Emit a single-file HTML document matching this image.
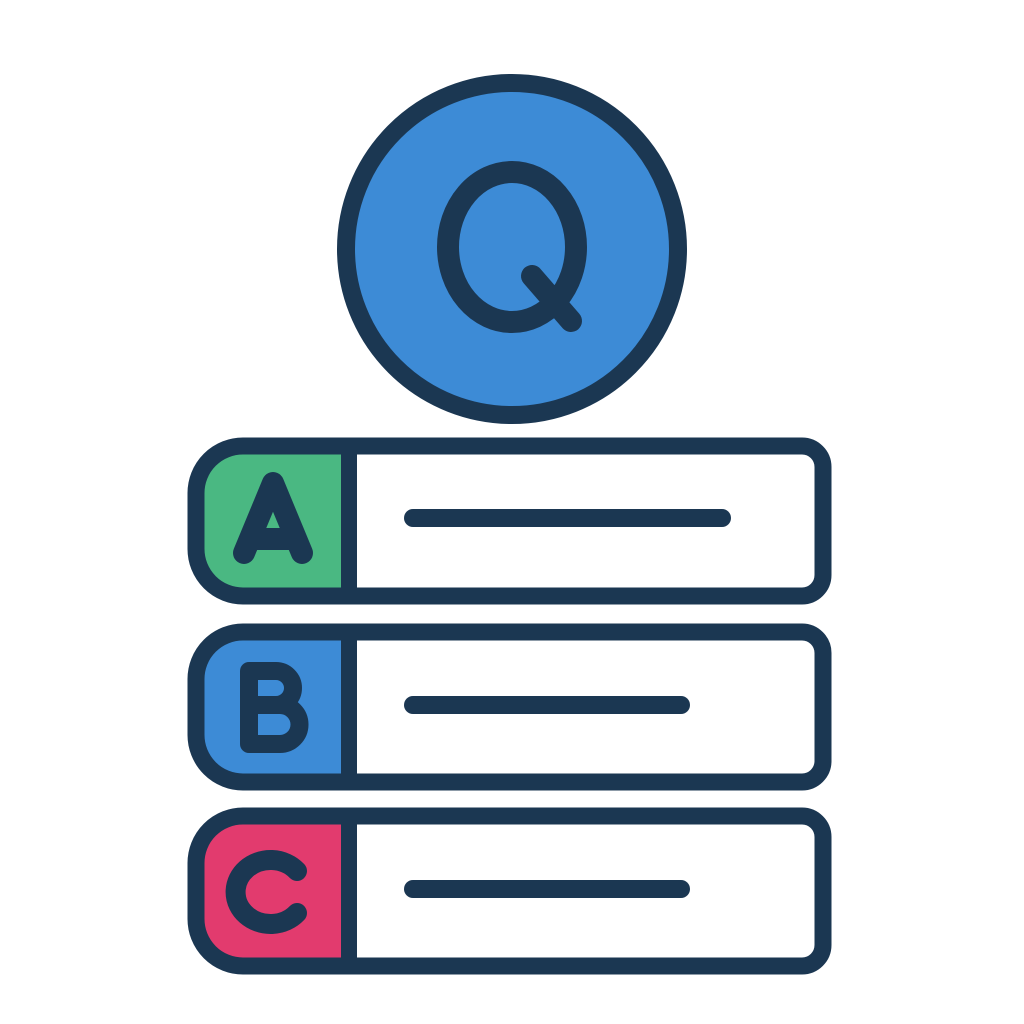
<!DOCTYPE html>
<html><head><style>html,body{margin:0;padding:0;background:#fff}svg{display:block}</style></head>
<body>
<svg width="1024" height="1024" viewBox="0 0 1024 1024" xmlns="http://www.w3.org/2000/svg">
<g stroke="#1b3752" fill="none" stroke-linecap="round" stroke-linejoin="round">
<circle cx="512" cy="249" r="166" fill="#3d8bd6" stroke-width="18"/>
<ellipse cx="512" cy="247" rx="64" ry="75" stroke-width="22"/>
<line x1="532" y1="276" x2="571" y2="321" stroke-width="22"/>

<!-- Row A -->
<path d="M349 446 H243 A47 47 0 0 0 196 493 V549 A47 47 0 0 0 243 596 H349 Z" fill="#4ab882" stroke="none"/>
<path d="M243 446 H802 A21 21 0 0 1 823 467 V575 A21 21 0 0 1 802 596 H243 A47 47 0 0 1 196 549 V493 A47 47 0 0 1 243 446 Z" stroke-width="17"/>
<line x1="349" y1="446" x2="349" y2="596" stroke-width="16" stroke-linecap="butt"/>
<path d="M244 553 L273 483 L302 553 M254 539 H292" stroke-width="22"/>
<line x1="413" y1="518" x2="722" y2="518" stroke-width="18"/>

<!-- Row B -->
<path d="M349 632 H243 A47 47 0 0 0 196 679 V735 A47 47 0 0 0 243 782 H349 Z" fill="#3d8bd6" stroke="none"/>
<path d="M243 632 H802 A21 21 0 0 1 823 653 V761 A21 21 0 0 1 802 782 H243 A47 47 0 0 1 196 735 V679 A47 47 0 0 1 243 632 Z" stroke-width="17"/>
<line x1="349" y1="632" x2="349" y2="782" stroke-width="16" stroke-linecap="butt"/>
<path d="M249 671 V744 H280 A19.5 19.5 0 0 0 280 705 H249 M249 671 H276 A17 17 0 0 1 276 705" stroke-width="18"/>
<line x1="413" y1="705" x2="681" y2="705" stroke-width="18"/>

<!-- Row C -->
<path d="M349 816 H243 A47 47 0 0 0 196 863 V919 A47 47 0 0 0 243 966 H349 Z" fill="#e23b6e" stroke="none"/>
<path d="M243 816 H802 A21 21 0 0 1 823 837 V945 A21 21 0 0 1 802 966 H243 A47 47 0 0 1 196 919 V863 A47 47 0 0 1 243 816 Z" stroke-width="17"/>
<line x1="349" y1="816" x2="349" y2="966" stroke-width="16" stroke-linecap="butt"/>
<path d="M297 871 A35 32 0 1 0 297 913" stroke-width="20"/>
<line x1="413" y1="889" x2="681" y2="889" stroke-width="18"/>
</g>
</svg>
</body></html>
